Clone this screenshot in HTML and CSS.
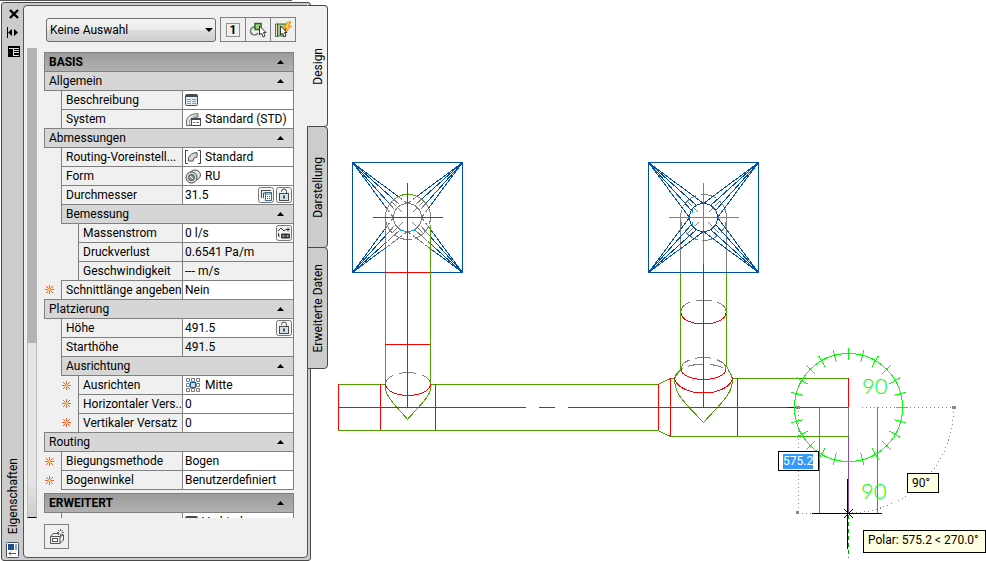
FILE: index.html
```html
<!DOCTYPE html>
<html lang="de">
<head>
<meta charset="utf-8">
<title>Eigenschaften</title>
<link rel="stylesheet" href="styles.css">
</head>
<body>
<svg class="defs" width="0" height="0" aria-hidden="true">
  <defs>
    <symbol id="i-star" viewBox="0 0 9 9"><path d="M4.500 0V9M0 4.500H9M1 1L8 8M8 1L1 8" stroke="#e8603c"/><circle cx="4.500" cy="4.500" r="1.500" fill="#ffd24a"/></symbol>
    <symbol id="i-form" viewBox="0 0 13 12"><rect x=".5" y=".5" width="12" height="11" rx="1" fill="#e8edf4" stroke="#454b55"/><path d="M1 2H12" stroke="#454b55" stroke-width="2"/><path d="M2 5.500H6M7 5.500H11M2 7.500H6M7 7.500H11M2 9.500H6M7 9.500H11" stroke="#8d99ad"/></symbol>
    <symbol id="i-lock" viewBox="0 0 16 16"><rect x=".5" y=".5" width="15" height="15" rx="2" fill="#f4f4f4" stroke="#777"/><path d="M5.500 5V4.500a2.500 2.500 0 0 1 5 0V7" fill="none" stroke="#454b50"/><rect x="3.500" y="6.500" width="9" height="7" fill="#cfe3e6" stroke="#454b50"/><path d="M8 8.500V11.500" stroke="#454b50" stroke-width="2"/></symbol>
    <symbol id="i-up" viewBox="0 0 7 4"><path d="M0 4L3.500 0L7 4Z" fill="#000"/></symbol>
  </defs>
</svg>
<div class="app">
  <section class="palette" aria-label="Eigenschaften">
    <aside class="strip">
      <button class="bare" aria-label="Schließen"><svg width="14" height="10" viewBox="0 0 14 10"><path d="M4 1L12 9M12 1L4 9" stroke="#000" stroke-width="2.400"/></svg></button>
      <button class="bare" aria-label="Fixieren"><svg width="14" height="11" viewBox="0 0 14 11"><path d="M1.500 0V11" stroke="#000"/><path d="M2 5.500L6 2V9ZM12 5.500L8 2V9Z"/></svg></button>
      <button class="bare" aria-label="Menü"><svg width="14" height="11" viewBox="0 0 14 11"><path d="M2 0H14V11H2Z"/><path d="M3 2.500H13M7.500 3V10M8 4.500H13M8 6.500H13M8 9.500H13" stroke="#ddd"/></svg></button>
      <h1>Eigenschaften</h1>
      <svg class="strip-icon" width="13" height="16" viewBox="0 0 13 16"><rect x=".5" y=".5" width="12" height="15" rx="1" fill="#fff" stroke="#40506b"/><path d="M2 2H8V8H2Z" fill="#1d4f8f"/><path d="M9 2H11V8H9Z" fill="#8ba3c2"/><path d="M3 11.500H10M5 9.500L3 11.500L5 13.500" fill="none" stroke="#555"/></svg>
    </aside>
    <div class="panel">
      <div class="toolbar">
        <select aria-label="Auswahl"><option>Keine Auswahl</option></select>
        <div class="tools">
          <button aria-label="Einzelauswahl"><svg width="16" height="16" viewBox="0 0 16 16"><rect x="1.500" y="1.500" width="13" height="13" fill="none" stroke="#333" stroke-dasharray="1 1"/></svg><b>1</b></button>
          <button aria-label="Objekte wählen"><svg width="18" height="18" viewBox="0 0 18 18"><path d="M6 6A4 4 0 1 0 9 12" fill="none" stroke="#777" stroke-width="1.500"/><rect x="6" y="2.500" width="6" height="6" fill="#a9c77c" stroke="#16751c" stroke-width="1.500"/><path d="M10.500 5V14L12.500 12L14 16L16 15L14.500 11.500H17Z" fill="#fff" stroke="#333"/></svg></button>
          <button aria-label="Schnellauswahl"><svg width="18" height="18" viewBox="0 0 18 18"><path d="M1.500 3V15.500H3.500V3Z" fill="#e8e8c8" stroke="#4b7740"/><rect x="3.500" y="3" width="8" height="12" fill="#a9c77c" stroke="#2c7029"/><path d="M13.500 1L10 7H13L11 12L17.500 5H14L17 1Z" fill="#ffd23a" stroke="#f08a1c"/><path d="M6.500 5V14L8.500 12L10 16L12 15L10.500 11.500H13Z" fill="#fff" stroke="#333"/></svg></button>
        </div>
      </div>
      <div class="content">
        <div class="scroll"><div class="thumb"></div></div>
        <div class="lists">
          <table>
            <colgroup><col class="c-gap"><col class="c-gap"><col class="c-name"><col></colgroup>
            <tbody>
            <tr class="group main"><th colspan="4"><button>BASIS<svg width="7" height="4"><use href="#i-up"/></svg></button></th></tr>
            <tr class="group"><th colspan="4"><button>Allgemein<svg width="7" height="4"><use href="#i-up"/></svg></button></th></tr>
            <tr><td class="gap"></td><th colspan="2">Beschreibung</th><td><div class="val"><svg width="13" height="12"><use href="#i-form"/></svg></div></td></tr>
            <tr><td class="gap"></td><th colspan="2">System</th><td><div class="val"><svg width="16" height="16" viewBox="0 0 16 16"><path d="M1.500 14.500V10Q2 3 13 2.500V6Q8 6 7 10V14.500Z" fill="#eee" stroke="#666"/><path d="M4.500 14V10Q6 5 13 4.500" fill="none" stroke="#999"/><rect x="6.500" y="7.500" width="9" height="7" fill="#fff" stroke="#454b55"/><path d="M7 8.500H15" stroke="#454b55"/><path d="M8 11.500H10M11 11.500H14" stroke="#777"/></svg>Standard (STD)</div></td></tr>
            <tr class="group"><th colspan="4"><button>Abmessungen<svg width="7" height="4"><use href="#i-up"/></svg></button></th></tr>
            <tr><td class="gap"></td><th colspan="2">Routing-Voreinstell...</th><td><div class="val"><svg width="16" height="14" viewBox="0 0 16 14"><path d="M3 .5H.5V13.500H3M13 .5H15.500V13.500H13" fill="none" stroke="#444"/><path d="M3.500 11V8Q5 3 12 2.500V7Q8 7 8 11Z" fill="#d5d5d5" stroke="#555"/></svg>Standard</div></td></tr>
            <tr><td class="gap"></td><th colspan="2">Form</th><td><div class="val"><svg width="16" height="15" viewBox="0 0 16 15"><ellipse cx="10" cy="6" rx="5.500" ry="5" fill="#e4e8ea" stroke="#555"/><circle cx="6.500" cy="8.500" r="5.500" fill="#d9dee0" stroke="#444"/><circle cx="6.500" cy="8.500" r="3" fill="#8e989d" stroke="#444"/><path d="M5 7L8 10" stroke="#fff"/></svg>RU</div></td></tr>
            <tr><td class="gap"></td><th colspan="2">Durchmesser</th><td><div class="val">31.5<span class="push"></span><button class="bare" aria-label="Rechner"><svg width="16" height="16" viewBox="0 0 16 16"><rect x=".5" y=".5" width="15" height="15" rx="2" fill="#f4f4f4" stroke="#777"/><path d="M6 3.500H3.500V11M3 3.500H13" fill="none" stroke="#454b50"/><path d="M5.500 11V6H8" fill="none" stroke="#454b50"/><rect x="7.500" y="5.500" width="6" height="8" fill="#fff" stroke="#3a6f91"/><path d="M8 7H13" stroke="#3a6f91"/><path d="M9 9.500H12.500M9 11.500H12.500" stroke="#17619a" stroke-dasharray="1 1"/></svg></button><button class="bare" aria-label="Sperren"><svg width="16" height="16"><use href="#i-lock"/></svg></button></div></td></tr>
            <tr class="group sub"><td class="gap"></td><th colspan="3"><button>Bemessung<svg width="7" height="4"><use href="#i-up"/></svg></button></th></tr>
            <tr><td class="gap"></td><td class="gap"></td><th>Massenstrom</th><td><div class="val">0 l/s<span class="push"></span><button class="bare" aria-label="Berechnen"><svg width="16" height="16" viewBox="0 0 16 16"><rect x=".5" y=".5" width="15" height="15" rx="2" fill="#f4f4f4" stroke="#777"/><path d="M2 6L5 3L8 6L10 4.500H14M12 2.500V6.500" fill="none" stroke="#333"/><rect x="5" y="8.500" width="9" height="5" rx="1" fill="#333"/><path d="M6.500 11H8.500M10.500 11H12.500" stroke="#fff"/><path d="M2.500 8V11H4" fill="none" stroke="#333"/></svg></button></div></td></tr>
            <tr><td class="gap"></td><td class="gap"></td><th>Druckverlust</th><td class="fixed"><div class="val">0.6541 Pa/m</div></td></tr>
            <tr><td class="gap"></td><td class="gap"></td><th>Geschwindigkeit</th><td class="fixed"><div class="val">--- m/s</div></td></tr>
            <tr><td class="gap"><svg width="9" height="9"><use href="#i-star"/></svg></td><th colspan="2">Schnittlänge angeben</th><td><div class="val">Nein</div></td></tr>
            <tr class="group"><th colspan="4"><button>Platzierung<svg width="7" height="4"><use href="#i-up"/></svg></button></th></tr>
            <tr><td class="gap"></td><th colspan="2">Höhe</th><td><div class="val">491.5<span class="push"></span><button class="bare" aria-label="Sperren"><svg width="16" height="16"><use href="#i-lock"/></svg></button></div></td></tr>
            <tr><td class="gap"></td><th colspan="2">Starthöhe</th><td class="fixed"><div class="val">491.5</div></td></tr>
            <tr class="group sub"><td class="gap"></td><th colspan="3"><button>Ausrichtung<svg width="7" height="4"><use href="#i-up"/></svg></button></th></tr>
            <tr><td class="gap"></td><td class="gap"><svg width="9" height="9"><use href="#i-star"/></svg></td><th>Ausrichten</th><td><div class="val"><svg width="16" height="14" viewBox="0 0 16 14"><path d="M1.500 .5h3v3h-3zM6.500 .5h3v3h-3zM11.500 .5h3v3h-3zM1.500 5.500h3v3h-3zM11.500 5.500h3v3h-3zM1.500 10.500h3v3h-3zM6.500 10.500h3v3h-3zM11.500 10.500h3v3h-3z" fill="#fff" stroke="#777"/><rect x="5.500" y="4.500" width="5" height="5" fill="#bfe0f8" stroke="#0b5fa8"/></svg>Mitte</div></td></tr>
            <tr><td class="gap"></td><td class="gap"><svg width="9" height="9"><use href="#i-star"/></svg></td><th>Horizontaler Vers...</th><td><div class="val">0</div></td></tr>
            <tr><td class="gap"></td><td class="gap"><svg width="9" height="9"><use href="#i-star"/></svg></td><th>Vertikaler Versatz</th><td><div class="val">0</div></td></tr>
            <tr class="group"><th colspan="4"><button>Routing<svg width="7" height="4"><use href="#i-up"/></svg></button></th></tr>
            <tr><td class="gap"><svg width="9" height="9"><use href="#i-star"/></svg></td><th colspan="2">Biegungsmethode</th><td><div class="val">Bogen</div></td></tr>
            <tr class="last"><td class="gap"><svg width="9" height="9"><use href="#i-star"/></svg></td><th colspan="2">Bogenwinkel</th><td><div class="val">Benutzerdefiniert</div></td></tr>
            </tbody>
          </table>
          <table>
            <colgroup><col class="c-gap"><col class="c-gap"><col class="c-name"><col></colgroup>
            <tbody>
            <tr class="group main"><th colspan="4"><button>ERWEITERT<svg width="7" height="4"><use href="#i-up"/></svg></button></th></tr>
            <tr><td class="gap"></td><th colspan="2"></th><td><div class="val"><svg width="13" height="12"><use href="#i-form"/></svg>Verbindungen</div></td></tr>
            </tbody>
          </table>
        </div>
      </div>
      <div class="footer">
        <button aria-label="Eigenschaftssatz hinzufügen"><svg width="18" height="16" viewBox="0 0 18 16"><path d="M2.500 7.500L5 4.500H12L15.500 6V11L12 14.500H2.500Z" fill="#eee" stroke="#555"/><path d="M2.500 7.500H12V14.500M12 7.500L15.500 6" fill="none" stroke="#555"/><rect x="4.500" y="9.500" width="5" height="3" fill="#fff" stroke="#555"/><path d="M12.500 0V7M9 3.500H16M10 1L15 6M15 1L10 6" stroke="#666"/><circle cx="12.500" cy="3.500" r="1.500" fill="#fff"/></svg></button>
      </div>
    </div>
    <nav class="tabs">
      <button class="active"><span>Design</span></button>
      <button><span>Darstellung</span></button>
      <button><span>Erweiterte Daten</span></button>
    </nav>
  </section>
  <main class="canvas">
    <svg class="drawing" width="658" height="561" viewBox="328 0 658 561">
      <defs>
        <g id="rays">
          <path id="ray" d="M-55 -55L-14 0M-55 -55L-12 -7M-55 -55L-7 -12M-55 -55L0 -14"/>
          <use href="#ray" transform="scale(-1 1)"/><use href="#ray" transform="scale(1 -1)"/><use href="#ray" transform="scale(-1 -1)"/>
        </g>
        <path id="dashes" d="M-16 -16L-11 -11M-9 -9L-5 -5M16 -16L11 -11M9 -9L5 -5M-16 16L-11 11M-9 9L-5 5M16 16L11 11M9 9L5 5"/>
        <clipPath id="pipe"><path d="M385 273V217A22.500 22.500 0 0 1 430 217V273Z"/></clipPath>
      </defs>
      <g class="lines">
        <g class="grey">
          <path d="M680.500 215V272M726.500 215V272M668.500 217.500H739M703.500 183V264"/>
          <circle cx="703.500" cy="217.500" r="23" stroke-dasharray="16 5"/>
          <use href="#dashes" x="703.500" y="217.500"/>
          <path d="M385.500 222V217A22.500 22.500 0 0 1 430.500 217V222"/>
          <path d="M385.500 384A22.500 11.500 0 0 1 430.500 384" stroke-dasharray="12 6 17 6"/>
          <path d="M681 311A22.500 11 0 0 1 726 311M681 369A22.500 11.500 0 0 1 726 369M675 378A28.500 14 0 0 1 732 378" stroke-dasharray="13 6 16 6"/>
        </g>
        <g class="blue">
          <rect x="352.500" y="162.500" width="110" height="110"/>
          <use href="#rays" x="407.500" y="217.500"/>
          <rect x="648.500" y="162.500" width="110" height="110"/>
          <use href="#rays" x="703.500" y="217.500"/>
          <circle cx="703.500" cy="217.500" r="14"/>
        </g>
        <g class="grey" clip-path="url(#pipe)"><rect x="386" y="196" width="44" height="76" class="blank"/><path d="M385.500 273V217A22.500 22.500 0 0 1 430.500 217V273"/><circle cx="407.500" cy="217.500" r="14"/><path d="M385.500 217A22.500 22.500 0 0 0 430.500 217" stroke-dasharray="18 3"/><g stroke-dasharray="14 2"><use href="#rays" x="407.500" y="217.500"/></g><use href="#dashes" x="407.500" y="217.500"/></g>
        <path class="cyan" d="M400 230H404M412 230H416M692 209V213M692 222V226"/>
        <g class="green">
          <path d="M397 197Q407 192 416 196M422 200L424 202M385.500 225V390M430.500 225V390M338 384.500H385M430 384.500H658L670.500 378.500H674M338 430.500H658L670.500 436.500H848M732 378.500H848"/>
          <path d="M385.500 390C388 400 400 410 407.500 419.500C415 410 428 400 430.500 390"/>
          <path d="M680.500 273V370L674.500 378C674 394 684 402 703.500 422.500C722 402 733 394 732.500 378L726.500 366V273"/>
          <path d="M819.500 407V513M877.500 407V513"/>
        </g>
        <g class="red">
          <path d="M372.500 217.500H443M407.500 183V407M385 272.500H430M385 344.500H430M338.500 384V430M380.500 384V430M435.500 384V430"/>
          <path d="M338 407.500H526M539 407.500H555M568 407.500H848M703.500 264V407M658.500 384V430M670.500 378V436M737.500 378V436M848.500 378V407"/>
          <path d="M385.500 384A22.500 11.500 0 0 0 430.500 384M681 313A22.500 11 0 0 0 726 313M681 369A22.500 10.500 0 0 0 726 369M674.500 377A29 16 0 0 0 732.500 377"/>
        </g>
        <path class="navy" d="M788 407.500H800"/>
        <path class="grey" d="M848.500 407V436"/>
        <path class="purple" d="M848.500 436V513"/>
        <g class="dots">
          <path d="M798.500 407V513M798 513.500H848M862 407.500H953M953.500 408A105 105 0 0 1 848 513"/>
        </g>
        <path class="knobs" d="M796 406h4v3h-4zM796 511h3v3h-3zM952 406h4v3h-4z"/>
        <g class="lime">
          <circle cx="848.500" cy="407.500" r="54"/>
          <path d="M848.500 348V360"/><path d="M848.500 348V360" transform="rotate(15 848.500 407.500)"/><path d="M848.500 348V360" transform="rotate(30 848.500 407.500)"/><path d="M848.500 348V360" transform="rotate(45 848.500 407.500)"/><path d="M848.500 348V360" transform="rotate(60 848.500 407.500)"/><path d="M848.500 348V360" transform="rotate(75 848.500 407.500)"/><path d="M848.500 348V360" transform="rotate(90 848.500 407.500)"/><path d="M848.500 348V360" transform="rotate(105 848.500 407.500)"/><path d="M848.500 348V360" transform="rotate(120 848.500 407.500)"/><path d="M848.500 348V360" transform="rotate(135 848.500 407.500)"/><path d="M848.500 348V360" transform="rotate(150 848.500 407.500)"/><path d="M848.500 348V360" transform="rotate(165 848.500 407.500)"/><path d="M848.500 348V360" transform="rotate(195 848.500 407.500)"/><path d="M848.500 348V360" transform="rotate(210 848.500 407.500)"/><path d="M848.500 348V360" transform="rotate(225 848.500 407.500)"/><path d="M848.500 348V360" transform="rotate(240 848.500 407.500)"/><path d="M848.500 348V360" transform="rotate(255 848.500 407.500)"/><path d="M848.500 348V360" transform="rotate(285 848.500 407.500)"/><path d="M848.500 348V360" transform="rotate(300 848.500 407.500)"/><path d="M848.500 348V360" transform="rotate(315 848.500 407.500)"/><path d="M848.500 348V360" transform="rotate(330 848.500 407.500)"/><path d="M848.500 348V360" transform="rotate(345 848.500 407.500)"/>
        </g>
        <path class="track" d="M848.500 515V558"/>
        <path class="black" d="M812 513.500H882M847.500 479V549M844 509L853 518M853 509L844 518"/>
      </g>
      <text class="angle" x="862" y="394">90</text>
      <text class="angle" x="861" y="499">90</text>
    </svg>
    <label class="length"><input type="text" value="575.2" aria-label="Länge"></label>
    <output class="tip tip-angle">90°</output>
    <output class="tip tip-polar">Polar: 575.2 &lt; 270.0°</output>
  </main>
</div>
</body>
</html>
```
FILE: styles.css
```css
* { box-sizing: border-box; }
body { margin: 0; background: #fff; color: #000; font: 12px/18px Roboto, "Open Sans", sans-serif; overflow: hidden; }
button, input, select { font: inherit; color: inherit; }
button { margin: 0; padding: 0; cursor: pointer; }
svg { display: block; flex: none; }
.defs { position: absolute; }
.bare { border: 0; background: none; }

.app { display: flex; height: 100vh; padding-top: 2px; position: relative; }
.app::before { content: ""; position: absolute; top: 0; left: 0; width: 292px; height: 1px; background: #555; }

.palette { display: flex; flex: none; width: 310px; margin-left: 1px; padding: 2px 0; background: #ccc; border: 1px solid #484848; border-radius: 3px; }
.strip { width: 21px; display: flex; flex-direction: column; align-items: center; gap: 8px; padding: 4px 0 0; }
.strip h1 { margin: auto 0 0; font-size: 12px; font-weight: 400; line-height: 18px; writing-mode: vertical-rl; transform: rotate(180deg); }

.panel { flex: none; width: 285px; display: flex; flex-direction: column; background: #f0f0f0; border: 1px solid #555; border-radius: 4px 0 4px 4px; }
.toolbar { display: flex; gap: 4px; padding: 11px 11px 0 22px; align-items: center; position: relative; }
.toolbar select { flex: 1; height: 24px; padding: 0 22px 0 0; border: 1px solid #707070; border-radius: 3px; appearance: none; text-indent: 3px;
  background: linear-gradient(#f4f4f4, #ebebeb 50%, #dddddd 51%, #cfcfcf); }
.toolbar::after { content: ""; position: absolute; left: 181px; top: 22px; border: 4px solid transparent; border-top-color: #000; border-bottom: 0; pointer-events: none; }
.tools { display: flex; border: 1px solid #808080; }
.tools button { display: grid; place-items: center; width: 25px; height: 23px; background: #efefef; border: 0; border-left: 1px solid #808080; }
.tools button:first-child { border-left: 0; width: 24px; }
.tools button > * { grid-area: 1 / 1; }
.tools b { font-size: 12px; line-height: 16px; }

.content { display: flex; flex: 1; min-height: 0; padding: 6px 13px 0 3px; gap: 7px; }
.scroll { width: 10px; background: linear-gradient(#e6e6e6 92%, #ccc); border: 1px solid #bbb; border-top: 0; border-bottom: 1px solid #000; }
.thumb { height: 63%; margin: 0 -1px; background: #b3b3b3; }
.lists { flex: 1; min-width: 0; overflow: hidden; padding-top: 4px; }

table { width: 100%; table-layout: fixed; border-collapse: separate; border-spacing: 0; margin-bottom: 3px; }
.c-gap { width: 17px; }
.c-name { width: 104px; }
tr { height: 19px; }
th, td { height: 19px; padding: 0; border: 0 solid #808080; border-width: 1px 0 0 1px; font-weight: 400; text-align: left; white-space: nowrap; overflow: hidden; background: #f0f0f0; }
tr > :last-child { border-right-width: 1px; background: #fff; }
tr > .fixed:last-child { background: #f0f0f0; }
th { padding-left: 4px; }
.gap { border-width: 0; }
.gap svg { margin-left: 1px; }
.group:not(.sub) + tr > .gap { border-top-width: 1px; }
.sub + tr > .gap:nth-child(2) { border-top-width: 1px; }
.last > :not(.gap) { border-bottom-width: 1px; }
.last { height: 20px; }
.group > th:last-child { background: #d6d6d6; }
.main > th:last-child { background: linear-gradient(#9c9c9c, #b0b0b0); }
.group button { display: flex; align-items: center; justify-content: space-between; width: 100%; height: 18px; padding-right: 9px; border: 0; background: none; }
.main button { font-weight: 700; }
.val { display: flex; align-items: center; gap: 4px; height: 18px; padding: 0 1px 0 2px; }
.val button { margin-left: -2px; }
.push { flex: 1; }

.footer { padding: 6px 20px 8px; }
.footer button { display: grid; place-items: center; width: 25px; height: 25px; background: #f0f0f0; border: 1px solid #808080; }

.tabs { display: flex; flex: none; flex-direction: column; position: relative; width: 20px; margin-right: -20px; }
.tabs button { display: flex; align-items: center; justify-content: center; width: 21px; height: 122px; margin: 0 0 -1px -1px; background: #ccc; border: 1px solid #484848; border-radius: 0 4px 4px 0; }
.tabs .active { background: #f0f0f0; border-left-color: #f0f0f0; }
.tabs span { writing-mode: vertical-rl; transform: rotate(180deg); line-height: 18px; }

.canvas { flex: 1; position: relative; margin: -2px 0 0 17px; }
.lines { fill: none; shape-rendering: crispEdges; stroke-width: 1px; }
.grey { stroke: #808080; }
.blank { fill: #fff; stroke: none; }
.blue { stroke: #0050a5; }
.cyan { stroke: #00a5e0; }
.green { stroke: #4fa000; }
.red { stroke: #f00; }
.navy { stroke: #00f; }
.purple { stroke: #8050a0; }
.lime { stroke: #0f0; }
.black { stroke: #000; }
.track { stroke: #00a000; stroke-dasharray: 4 3; }
.dots { stroke: #888; stroke-dasharray: 1 3; }
.knobs { fill: #888; }
.angle { font: 300 22px/1 Lato, "Open Sans", sans-serif; fill: #0f0; }
.length { position: absolute; left: 450px; top: 451px; display: flex; width: 41px; height: 20px; padding: 2px 4px; background: #fff; border: 1px solid #000; }
.length input { width: 30px; height: 15px; padding: 0; border: 0; background: #3399ff; color: #fff; line-height: 15px; }
.tip { position: absolute; padding: 0 4px; background: #ffffe1; border: 1px solid #000; white-space: nowrap; }
.tip-angle { left: 579px; top: 473px; width: 32px; height: 20px; }
.tip-polar { left: 535px; top: 530px; width: 123px; height: 23px; }
```
